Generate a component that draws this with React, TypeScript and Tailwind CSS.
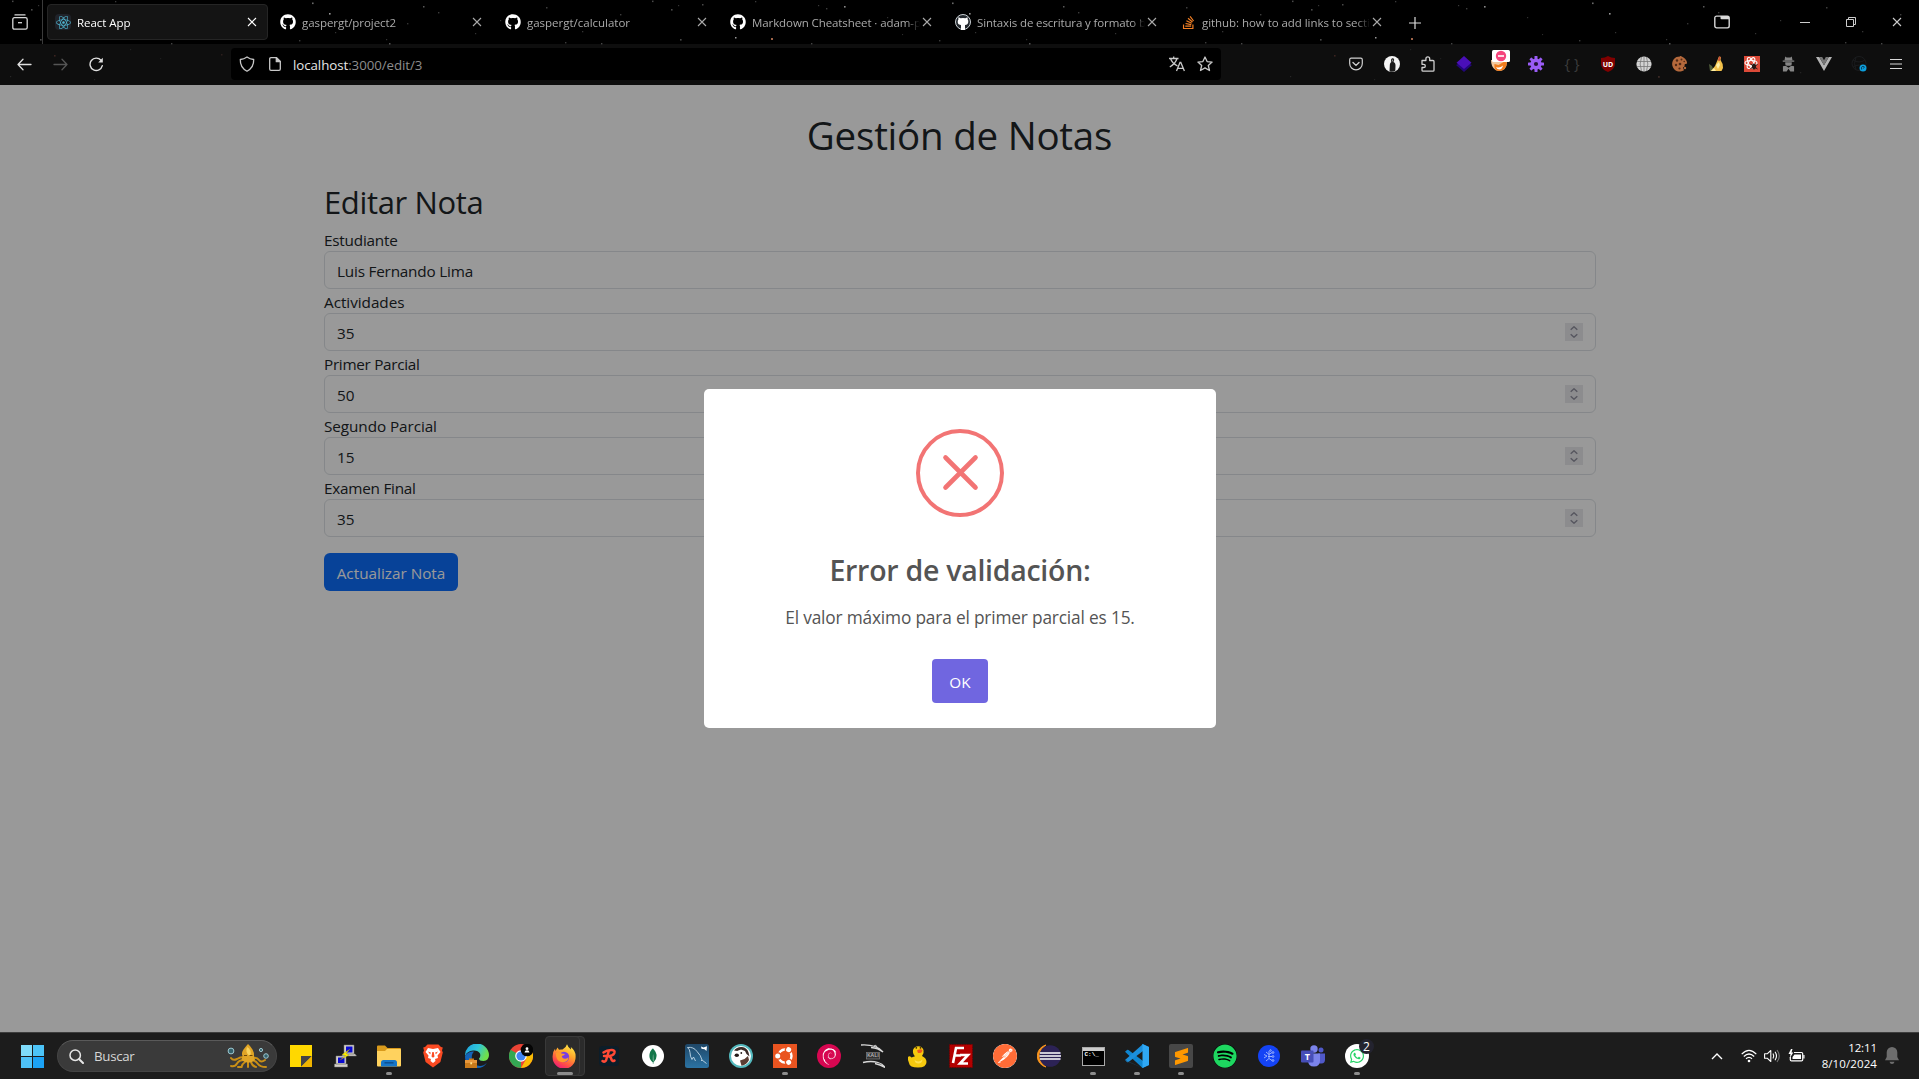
import type { ReactNode } from "react";
import { FaGithub, FaReact, FaStackOverflow, FaWhatsapp, FaSpotify } from "react-icons/fa";
import { SiDebian, SiMongodb, SiPostman, SiSublimetext } from "react-icons/si";

/* ---------- starry browser theme ---------- */

const stars: [number, number, number, string][] = [
  [31, 9, 1.6, "#4a4a4a"], [38, 5, 1.2, "#333"], [115, 1, 1.3, "#3a3a3a"], [40, 39, 1.6, "#484848"], [95, 37, 1.5, "#999"],
  [131, 38, 2, "#a0654a"], [178, 5, 1.2, "#383838"], [186, 8, 1.4, "#3c3c3c"], [204, 6, 1.6, "#8a8a8a"], [171, 43, 1.4, "#444"],
  [312, 2.5, 1.6, "#6a6a6a"], [329, 13, 1.6, "#999"], [423, 6, 1.5, "#5a5a5a"], [438, 12, 1.4, "#3c3c3c"], [407, 23, 1.4, "#333"],
  [299, 40, 1.4, "#3c3c3c"], [335, 32, 1.2, "#333"], [386, 39, 1.2, "#333"], [389, 43, 1.5, "#555"], [62, 4, 1.5, "#484848"],
  [601, 43, 1.4, "#484848"], [565, 42, 1.4, "#3c3c3c"], [12, 0.6, 1.5, "#4a4a4a"], [500, 20, 1.2, "#333"], [546, 7, 1.5, "#3c3c3c"],
  [582, 31, 1.3, "#333"], [247, 17, 1.2, "#2e2e2e"], [262, 34, 1.1, "#2c2c2c"], [475, 33, 1.2, "#333"], [620, 14, 1.4, "#3c3c3c"],
  [54, 55, 1.6, "#3a2420"], [10, 76, 1.2, "#262626"], [94, 79, 1.2, "#222"], [160, 58, 1.2, "#1e1e1e"], [221, 54, 1.5, "#2c1e1c"],
  [378, 76, 1.8, "#3a2824"], [330, 61, 1.3, "#222"], [130, 49, 1.2, "#222"], [440, 60, 1.2, "#222"], [520, 72, 1.3, "#242424"],
];

function StarField({ shift, height }: { shift: number; height: number }) {
  return (
    <svg className="pointer-events-none absolute inset-0" width="1919" height={height} aria-hidden="true">
      {[0, 640, 1280].map((dx) =>
        stars.map(([x, y, s, c], i) => <rect key={`${dx}-${i}`} x={x + dx} y={y - shift} width={s} height={s} fill={c} />),
      )}
    </svg>
  );
}

/* ---------- tabs ---------- */

const Cross = ({ className }: { className: string }) => (
  <svg width="10" height="10" viewBox="0 0 10 10" className={className}>
    <path d="M1 1l8 8M9 1l-8 8" stroke="currentColor" strokeWidth="1.1" fill="none" />
  </svg>
);

const Octocat = () => <FaGithub size={16} className="text-white" />;

const tabs: { title: string; icon: ReactNode; cls: string; active?: boolean }[] = [
  {
    title: "React App",
    cls: "tracking-[-0.04px] text-white",
    active: true,
    icon: (
      <span className="flex size-4 items-center justify-center rounded-sm bg-[#20232a]">
        <FaReact size={15} className="text-[#4fb4cf]" />
      </span>
    ),
  },
  { title: "gaspergt/project2", cls: "tracking-[-0.06px] text-[#aaa]", icon: <Octocat /> },
  { title: "gaspergt/calculator", cls: "tracking-[-0.01px] text-[#aaa]", icon: <Octocat /> },
  { title: "Markdown Cheatsheet · adam-p", cls: "tracking-[-0.09px] text-[#aaa]", icon: <Octocat /> },
  {
    title: "Sintaxis de escritura y formato b",
    cls: "tracking-[-0.13px] text-[#aaa]",
    icon: (
      <svg width="16" height="16" viewBox="0 0 16 16">
        <circle cx="8" cy="8" r="7.5" fill="#24292e" stroke="#dfe5ea" strokeWidth=".9" />
        <path d="M3.6 3.2l2 1q2.4-.5 4.8 0l2-1q.5 1 .2 2.1.9 1 .7 2.600-.3 2.800-3.300 3.100v5H6v-5C3 10.500 2.700 9 2.700 7.700c0-1 .3-1.800.8-2.400-.3-.9-.1-1.700.1-2.100z" fill="#fff" />
      </svg>
    ),
  },
  {
    title: "github: how to add links to secti",
    cls: "tracking-[-0.05px] text-[#aaa]",
    icon: <FaStackOverflow size={15} className="text-[#f48024]" />,
  },
];

function TabStrip() {
  return (
    <div className="relative flex h-11 bg-black">
      <StarField shift={0} height={44} />
      <div className="relative flex w-[43px] items-center justify-center border-r border-[#3a3a3a] pr-0.5">
        <svg width="16" height="16" viewBox="0 0 16 16" fill="none" stroke="#d8d8d8" strokeWidth="1.3">
          <path d="M3 .9h10" strokeLinecap="round" />
          <path d="M.8 5.4q0-1.7 1.7-1.7h11q1.7 0 1.7 1.7v8q0 1.7-1.7 1.7h-11q-1.7 0-1.7-1.7z" />
          <path d="M6 8.7h4" />
        </svg>
      </div>
      <div className="relative ml-1 flex gap-1 py-1">
        {tabs.map((t) => (
          <div
            key={t.title}
            className={
              t.active
                ? "flex w-[221px] items-center rounded border border-[#252525] bg-[#141414] pl-[7px]"
                : "flex w-[221px] items-center border border-transparent pl-[7px]"
            }
          >
            <span className="flex size-4 shrink-0 items-center justify-center">{t.icon}</span>
            <span className="ml-1.5 w-[168px] shrink-0 overflow-hidden mask-r-from-92% mask-r-to-100%">
              <span className={`block pt-px text-[11.5px] leading-5 whitespace-nowrap ${t.cls}`}>{t.title}</span>
            </span>
            <Cross className={t.active ? "ml-0.5 shrink-0 text-white" : "ml-0.5 shrink-0 text-[#aaa]"} />
          </div>
        ))}
      </div>
      <div className="relative ml-4 flex items-center">
        <svg width="12" height="12" viewBox="0 0 12 12" className="mt-0.5">
          <path d="M6 0v12M0 6h12" stroke="#ddd" strokeWidth="1.2" />
        </svg>
      </div>
      <div className="relative ml-auto -mr-px flex items-center">
        <span className="mr-[37px] flex w-[46px] justify-center">
          <svg width="16" height="14" viewBox="0 0 16 14">
            <rect x=".8" y="1.1" width="14.4" height="11.8" rx="1.8" fill="none" stroke="#d8d8d8" strokeWidth="1.4" />
            <path d="M6.500 1h8.500v3.200H7.500q-1 0-1-1z" fill="#d8d8d8" />
          </svg>
        </span>
        <span className="flex w-[46px] justify-center">
          <svg width="10" height="10"><path d="M0 5.5h10" stroke="#ccc" /></svg>
        </span>
        <span className="flex w-[46px] justify-center">
          <svg width="10" height="10" fill="none" stroke="#ccc"><path d="M.5 2.5h7v7h-7zM2.500 2.500v-2h7v7h-2" /></svg>
        </span>
        <span className="flex w-[46px] justify-center text-[#ccc]"><Cross className="" /></span>
      </div>
    </div>
  );
}

/* ---------- toolbar ---------- */

const extensions: ReactNode[] = [
  <svg key="pocket" width="14" height="14" viewBox="0 0 14 14" fill="none" stroke="#d0d0d0" strokeWidth="1.2" strokeLinecap="round">
    <path d="M2.2 1.2h9.6q1.5 0 1.5 1.5V6.500a6.300 6.300 0 0 1-12.600 0V2.700q0-1.500 1.500-1.500z" />
    <path d="M4 5.500l3 2.900 3-2.900" strokeWidth="1.4" />
  </svg>,
  <svg key="avatar" width="16" height="16" viewBox="0 0 16 16">
    <circle cx="8" cy="8" r="8" fill="#f5f5f5" />
    <path d="M8.500 2.300c1.300 0 1.800.9 1.600 2-.1.900-.4 1.300-.7 1.800 1.500.5 2.200 1.700 2.100 3.800l-.2 4.800Q8.500 16.500 5.500 15.200L5.800 9.500c.1-2 .7-2.900 1.600-3.400-.6-1.400-.5-3.700 1.100-3.800z" fill="#1c1c1c" />
    <path d="M8 3.600l1.300.2-.3 1.800-.9-.3z" fill="#999" />
  </svg>,
  <svg key="puzzle" width="14" height="16" viewBox="0 0 14 16" fill="none" stroke="#d0d0d0" strokeWidth="1.3" strokeLinejoin="round">
    <path d="M1 4.500h3.900V2.800a1.900 1.900 0 0 1 3.800 0v1.700H12q1 0 1 1v8.700q0 1-1 1H2q-1 0-1-1v-2.700h1.700a1.600 1.600 0 0 0 0-3.200H1z" />
  </svg>,
  <svg key="diamond" width="16" height="16" viewBox="0 0 16 16">
    <path d="M8 5l8 4-8 7-8-7z" fill="#22067a" />
    <path d="M8 0l7.5 6.8L8 13 .5 6.8z" fill="#4a0fb8" />
  </svg>,
  <svg key="fox" width="20" height="22" viewBox="0 0 20 22" className="-mt-1.5 ml-0.5">
    <path d="M0 10q0 7 4.500 10 5 2.500 9-1Q16.500 15.500 16 10z" fill="#f2c79c" />
    <path d="M3.500 14l4 1 5-3 3-2q1 5.500-2 9-4.500 3.500-9 1-1.500-2-1-6z" fill="#f07c1d" />
    <path d="M5 17q4 1.500 7-1.500-1 4-3.500 4T5 17z" fill="#fff" />
    <rect x="1" y="0" width="18" height="12" rx="1.5" fill="#fff" />
    <circle cx="10" cy="6" r="5.2" fill="#f5447c" />
    <path d="M7 6h6" stroke="#fff" strokeWidth="1.6" />
  </svg>,
  <svg key="gear" width="16" height="16" viewBox="-8 -8 16 16">
    <g fill="#9a5cf5">
      {[0, 45, 90, 135].map((a) => <rect key={a} x="-1.5" y="-8" width="3" height="16" rx=".6" transform={`rotate(${a})`} />)}
      <circle r="5.6" />
    </g>
    <circle r="2.1" fill="#241238" />
  </svg>,
  <span key="json" className="mb-0.5 text-[15px] leading-4 whitespace-nowrap text-[#3c3c3c]">{"{ }"}</span>,
  <span key="ud" className="relative flex size-4 items-center justify-center">
    <svg className="absolute inset-0" width="16" height="16" viewBox="0 0 16 16">
      <path d="M8 0q3 2 7 2v6q0 5-7 8-7-3-7-8V2q4 0 7-2z" fill="#800000" />
    </svg>
    <span className="relative text-[7px] leading-none font-bold text-white">UD</span>
  </span>,
  <svg key="globe" width="16" height="16" viewBox="0 0 16 16">
    <circle cx="8" cy="8" r="7.6" fill="#d2d2d2" />
    <path d="M8 .5v15M1 5.500h14M1 10.500h14M5.500 1Q2.800 8 5.500 15M10.500 1q2.700 7 0 14" fill="none" stroke="#777" strokeWidth=".8" />
  </svg>,
  <svg key="cookie" width="16" height="16" viewBox="0 0 16 16">
    <path d="M8 .4A7.600 7.600 0 1 0 12 14.300l-1-2.800 1.500-1 .2-2.300 2.400-.6q0-4-3.600-6.200T8 .4z" fill="#b5693c" />
    <g fill="#512a17"><circle cx="5" cy="4.5" r="1.2" /><circle cx="9.5" cy="3.5" r="1" /><circle cx="4" cy="9" r="1.2" /><circle cx="8" cy="8" r="1.3" /><circle cx="7.5" cy="12.5" r="1.1" /><circle cx="12.2" cy="5.5" r=".8" /></g>
    <circle cx="13" cy="12" r="1.2" fill="#b5693c" />
  </svg>,
  <svg key="broom" width="16" height="16" viewBox="0 0 16 16">
    <path d="M1 8l3 2 2 5H2z" fill="#53603c" />
    <path d="M11 .5l2 .5-.5 3q3 4 2.500 8l-1.500 3H3l4-5z" fill="#f2c14b" />
    <path d="M3 15l3-3 2 3zM8 9l3-3 1 3-2 4z" fill="#fff0a6" />
    <path d="M11 .5l1.800.5-1 4-2-.5z" fill="#c94f35" />
  </svg>,
  <svg key="redbug" width="16" height="16" viewBox="0 0 16 16">
    <rect width="16" height="16" fill="#dc4a38" />
    <g fill="none" stroke="#fff" strokeWidth="1.1"><ellipse cx="7" cy="7" rx="6" ry="2.5" /><ellipse cx="7" cy="7" rx="6" ry="2.5" transform="rotate(60 7 7)" /><ellipse cx="7" cy="7" rx="6" ry="2.5" transform="rotate(120 7 7)" /></g>
    <ellipse cx="10" cy="10.5" rx="2" ry="3" fill="#251815" />
    <path d="M6.500 8l7 5M6.500 12.500l7-4" stroke="#251815" />
  </svg>,
  <svg key="agent" width="13" height="16" viewBox="0 0 14 16" fill="#858585">
    <path d="M3.500 0L5 1h4l1.500-1 .8 4H2.700zM.8 4.200h12.400v1.400H.8z" />
    <path d="M3.500 6h7v2.500L9 10H5L3.500 8.500zM1 10.500l3-.5 3 2 3-2 3 .5V16H9l-2-3-2 3H1z" />
  </svg>,
  <svg key="vue" width="16" height="14" viewBox="0 0 16 14">
    <path d="M0 0h3.200L8 8.300 12.800 0H16L8 14z" fill="#b4b4b4" />
    <path d="M3.200 0h3L8 3.200 9.800 0h3L8 8.300z" fill="#777" />
  </svg>,
  <svg key="globe-blue" width="18" height="18" viewBox="0 0 18 18">
    <g fill="none" stroke="#1a1c1e"><circle cx="8" cy="8.5" r="7" /><path d="M2 5q6 4 12 0M2 12q6-4 12 0M5 2q-3 6.500 0 13" /></g>
    <circle cx="12" cy="13" r="3.5" fill="#0c9fdc" />
    <path d="M10.500 14.500v-2.300l1.500-1 1.500 1-1.700 1.400" stroke="#073b57" fill="none" strokeWidth=".9" />
  </svg>,
  <svg key="menu" width="12" height="12" stroke="#d8d8d8" strokeWidth="1.2"><path d="M0 1.500h12M0 6h12M0 10.500h12" /></svg>,
];

function Toolbar() {
  return (
    <div className="relative flex h-[41px] bg-[#0e0e0e] pt-1 pb-[5px]">
      <StarField shift={44} height={41} />
      <div className="relative ml-1.5 flex w-[225px]">
        <span className="flex w-9 items-center justify-center">
          <svg width="15" height="13" fill="none" stroke="#e0e0e0" strokeWidth="1.3" strokeLinecap="round" strokeLinejoin="round"><path d="M14 6.500H1M6 1.300L1 6.500l5 5.200" /></svg>
        </span>
        <span className="flex w-9 items-center justify-center">
          <svg width="15" height="13" fill="none" stroke="#555" strokeWidth="1.3" strokeLinecap="round" strokeLinejoin="round"><path d="M1 6.500h13M9 1.300l5 5.200-5 5.200" /></svg>
        </span>
        <span className="flex w-9 items-center justify-center">
          <svg width="15" height="15" fill="none" stroke="#e0e0e0" strokeWidth="1.4" strokeLinecap="round"><path d="M13.300 8.700A6.200 6.200 0 1 1 12 3.300" /><path d="M13.800.8v4.600H9.200z" fill="#e0e0e0" stroke="none" /></svg>
        </span>
      </div>
      <div className="relative flex w-[990px] items-center rounded bg-black pl-2">
        <svg width="16" height="16" viewBox="0 0 16 16" fill="none" stroke="#c8c8c8" strokeWidth="1.3" strokeLinejoin="round">
          <path d="M8 .9q3 2.200 6.700 2.600Q15 11.500 8 15.200 1 11.500 1.300 3.500 5 3.100 8 .9z" />
        </svg>
        <svg width="12" height="14" viewBox="0 0 12 14" fill="none" stroke="#c8c8c8" strokeWidth="1.3" strokeLinejoin="round" className="ml-3.5">
          <path d="M7.500.7H2Q.7.7.7 2v10q0 1.300 1.300 1.300h8q1.300 0 1.300-1.300V4.500z" />
          <path d="M7.300.7v4h4z" fill="#c8c8c8" />
        </svg>
        <span className="ml-3 pt-0.5 text-[13.3px] leading-5 tracking-[-0.06px] text-[#8d8d8d]">
          <span className="text-[#e6e6e6]">localhost</span>:3000/edit/3
        </span>
        <span className="ml-auto flex items-center gap-3 pr-2">
          <svg width="16" height="16" viewBox="0 0 16 16" fill="none" stroke="#c8c8c8" strokeWidth="1.3">
            <path d="M0 2.500h9.500M4.700.5v2M1.500 2.500q1.500 4.500 7 7.500M8 2.500Q6.500 7.500.8 11" />
            <path d="M7.500 15l3.500-8.500h.8L15.400 15M8.800 12.300H14" />
          </svg>
          <svg width="16" height="16" viewBox="0 0 16 16" fill="none" stroke="#c8c8c8" strokeWidth="1.3" strokeLinejoin="round">
            <path d="M8 1l2.100 4.600 5 .5-3.800 3.400 1.200 5L8 11.900l-4.500 2.600 1.200-5L.9 6.100l5-.5z" />
          </svg>
        </span>
      </div>
      <div className="relative ml-[117px] flex">
        {extensions.map((e, i) => <span key={i} className="flex w-9 items-center justify-center">{e}</span>)}
      </div>
    </div>
  );
}

/* ---------- page ---------- */

const Spinner = () => (
  <span className="mr-3 flex size-[18px] items-center justify-center bg-[#e9e9ed]">
    <svg width="8" height="12" viewBox="0 0 8 12" fill="none" stroke="#8f8f9d" strokeWidth="1.4">
      <path d="M.7 3.800L4 .8l3.300 3M.7 8.200l3.300 3 3.300-3" />
    </svg>
  </span>
);

const fields = [
  { label: "Estudiante", value: "Luis Fernando Lima", l: "tracking-[-0.22px]", v: "tracking-[-0.2px]", number: false },
  { label: "Actividades", value: "35", l: "tracking-[-0.04px]", v: "tracking-normal", number: true },
  { label: "Primer Parcial", value: "50", l: "tracking-[-0.3px]", v: "tracking-normal", number: true },
  { label: "Segundo Parcial", value: "15", l: "tracking-[-0.08px]", v: "tracking-normal", number: true },
  { label: "Examen Final", value: "35", l: "tracking-[-0.24px]", v: "tracking-normal", number: true },
];

function NotePage() {
  return (
    <main className="relative flex h-[947px] flex-col bg-white text-[#212529]">
      <h1 className="h-[72px] pt-6 text-center text-[38.5px] leading-[53px] tracking-[-0.23px]">Gestión de Notas</h1>
      <section className="mt-6 ml-[324px] w-[1272px] text-[15.3px]">
        <h2 className="mb-2 h-[38px] text-[31px] leading-[42px] tracking-[-0.36px]">Editar Nota</h2>
        {fields.map((f) => (
          <div key={f.label}>
            <div className={`h-6 leading-[26px] ${f.l}`}>{f.label}</div>
            <div className="flex h-[38px] items-center justify-between rounded-md border border-[#dee2e6] pl-3">
              <span className={`pt-0.5 leading-[34px] ${f.v}`}>{f.value}</span>
              {f.number && <Spinner />}
            </div>
          </div>
        ))}
        <button className="mt-4 block h-[38px] w-[134px] rounded-md bg-[#0d6efd] leading-10 tracking-normal text-white">Actualizar Nota</button>
      </section>
      <div className="absolute inset-0 bg-black/40 pt-[304px] pl-[704px]">
        <div className="flex h-[339px] w-[512px] flex-col items-center rounded-[5px] bg-white pt-10 text-[#545454]">
          <svg width="88" height="88" viewBox="0 0 88 88" fill="none" stroke="#f27474" className="shrink-0">
            <circle cx="44" cy="44" r="42" strokeWidth="4" />
            <path d="M29.500 28.500l30 30M59.500 28.500l-30 30" strokeWidth="4.6" strokeLinecap="round" />
          </svg>
          <h2 className="mt-[22px] text-[28.5px] leading-[62px] font-semibold tracking-[-0.27px]">Error de validación:</h2>
          <p className="text-[17.3px] leading-[33px] tracking-[-0.17px]">El valor máximo para el primer parcial es 15.</p>
          <button className="mt-[25px] h-11 w-14 rounded bg-[#7066e0] text-[15.3px] leading-[46px] text-white">OK</button>
        </div>
      </div>
    </main>
  );
}

/* ---------- taskbar ---------- */

const Disc = ({ className, children }: { className: string; children: ReactNode }) => (
  <span className={`flex items-center justify-center rounded-full ${className}`}>{children}</span>
);

const apps: { name: string; icon: ReactNode; running?: boolean; active?: boolean }[] = [
  {
    name: "notes",
    icon: <svg width="22" height="22"><path d="M0 0h22v12L12 22H0z" fill="#ffd800" /><path d="M11 11h11L11 22z" fill="#444" /><path d="M22 11v11H11z" fill="#f0b400" /></svg>,
  },
  {
    name: "putty",
    icon: (
      <svg width="24" height="24" viewBox="0 0 24 24">
        <path d="M11 1h10v9H11zM10 10h12l1.500 2H9z" fill="#d4d0c8" stroke="#777" strokeWidth=".5" />
        <path d="M13 2.500h6.500v6H13z" fill="#0a0ad0" />
        <path d="M3 12h10v8H3zM1.500 20h13v3h-13z" fill="#d4d0c8" stroke="#777" strokeWidth=".5" />
        <path d="M5 13.500h6.500v5.500H5z" fill="#0a0ad0" />
        <path d="M17 5l-8 5.500 3.500 1L7 16l9-5-3-1.500z" fill="#fff200" stroke="#8a8200" strokeWidth=".3" />
      </svg>
    ),
  },
  {
    name: "explorer",
    running: true,
    icon: (
      <svg width="24" height="24" viewBox="0 0 24 24">
        <path d="M0 2.500Q0 1.500 1 1.500h7l2.500 2.500H23q1 0 1 1v6H0z" fill="#d99a1c" />
        <path d="M0 7h8l2-2h13q1 0 1 1v15.500q0 1-1 1H1q-1 0-1-1z" fill="#ffd25e" />
        <path d="M4 22.500v-4Q4 16 6.500 16h11q2.500 0 2.500 2.500v4z" fill="#1676c8" />
        <path d="M7.500 18.800h9" stroke="#0d4f8e" strokeWidth="1.5" />
      </svg>
    ),
  },
  {
    name: "brave",
    icon: (
      <svg width="24" height="24" viewBox="0 0 24 24">
        <path d="M6.500.5h11L20 3l1.800.5-.8 3 .8 2-2.400 9.500L12 23.500 4.600 18 2.200 8.500l.8-2-.8-3L4 3z" fill="#fb4a22" />
        <path d="M7 4l5 1 5-1 2.500 4-3 3.500.5 2.500-3 1 .5 2-2.500 2-2.500-2 .5-2-3-1 .5-2.500L4.500 8z" fill="#fff" />
        <path d="M7 7.500l3 1.200-1 1.500zM17 7.500l-3 1.200 1 1.500zM11.300 8h1.400l.8 4.500-1.500 1.200-1.500-1.200z" fill="#fb4a22" />
      </svg>
    ),
  },
  {
    name: "edge",
    icon: (
      <svg width="24" height="24" viewBox="0 0 24 24">
        <defs><linearGradient id="edg" x1="0" y1="0" x2="1" y2=".4"><stop offset="0" stopColor="#1c9fe0" /><stop offset=".55" stopColor="#2fc6d8" /><stop offset="1" stopColor="#6fe04a" /></linearGradient></defs>
        <path d="M0 12A12 12 0 0 1 24 11q0 5.500-5.500 6-4.500 0-4.500-2.500 2-2 1-5-2-3.500-7-3Q2 7 0 12z" fill="url(#edg)" />
        <path d="M0 12q3-5 9-4.500-3 3-2 8 2 6 8 6.500 4 0 7-3.500Q19 24 12 24 0 24 0 12z" fill="#1464b8" />
        <path d="M4 16v-1.500h5V16h3v8H0v-8z" fill="#c97a1b" />
        <path d="M0 16h12v3H0z" fill="#e8973a" />
        <path d="M5.300 18.300h1.800v2H5.300z" fill="#ffe28a" />
      </svg>
    ),
  },
  {
    name: "chrome",
    icon: (
      <svg width="24" height="24" viewBox="0 0 24 24">
        <circle cx="12" cy="12" r="12" fill="#ea4335" />
        <path d="M12 12L1.600 6A12 12 0 0 0 12 24z" fill="#34a853" />
        <path d="M12 24A12 12 0 0 0 22.400 6H12l5.200 9z" fill="#fbbc05" />
        <path d="M1.600 6l5.200 9L12 12z" fill="#34a853" />
        <circle cx="12" cy="12" r="5.8" fill="#fff" />
        <circle cx="12" cy="12" r="4.6" fill="#4285f4" />
        <circle cx="18" cy="6" r="6.3" fill="#050505" />
        <circle cx="18" cy="4.7" r="1.4" fill="#fff" />
        <path d="M15.500 8.500q.3-2.200 2.500-2.200t2.500 2.200z" fill="#fff" />
      </svg>
    ),
  },
  {
    name: "firefox",
    running: true,
    active: true,
    icon: (
      <svg width="24" height="24" viewBox="0 0 24 24">
        <defs><linearGradient id="ffx" x1=".8" y1="0" x2=".3" y2="1"><stop offset="0" stopColor="#fff04a" /><stop offset=".4" stopColor="#ffa52b" /><stop offset=".75" stopColor="#ff4f45" /><stop offset="1" stopColor="#ec1a7a" /></linearGradient></defs>
        <path d="M15 .3q1 3.200 4 5.200.2-1.500-.2-2.500Q24 7 23.600 13A11.500 11.500 0 0 1 .6 13.500Q.3 8 3 4.800L3.500 7l2-3.500 1.500 2.300q1.500-.5 3.500-.2Q14 4 15 .3z" fill="url(#ffx)" />
        <circle cx="12" cy="13" r="5.2" fill="#7a3ee0" />
        <path d="M4 9q3-1.500 5.500.5L13 10q-.5 1.500-3.200 2 .2 2.500 3.200 2.800 2.500.2 3.500-1.800 0 5-5.500 5.200T4 12z" fill="#ff9a2b" />
      </svg>
    ),
  },
  {
    name: "responsively",
    icon: (
      <svg width="20" height="20" viewBox="0 0 20 20">
        <rect width="20" height="20" rx="3.5" fill="#0c1d29" />
        <path d="M4.500 6.500Q8 3.800 13 4q3.500.5 2.300 3.200Q14 9.800 9.500 10.200M9.800 5L7 14.500q-1.500 2-3.500.5M9.500 10.200q2.500.3 2.800 3 .7 2.500 3.200 1.300M8.200 10H5" fill="none" stroke="#ff4a36" strokeWidth="2.5" strokeLinecap="round" />
      </svg>
    ),
  },
  { name: "mongodb", icon: <Disc className="size-[22px] bg-white"><SiMongodb size={16} className="text-[#13774a]" /></Disc> },
  {
    name: "mysql",
    icon: (
      <svg width="24" height="24" viewBox="0 0 24 24">
        <defs><linearGradient id="sql" x2="0" y2="1"><stop offset="0" stopColor="#1f4767" /><stop offset="1" stopColor="#2b73a3" /></linearGradient></defs>
        <rect width="24" height="24" rx="2.5" fill="url(#sql)" />
        <path d="M2.500 3.500q6-1 9.500 4 4 4 5 8.500l4.500 3.500M2.500 3.500q2.500 2 2.500 5 0 4 2 7l1.500-2.500 2 4M17 16l-1 1" fill="none" stroke="#c3d8e6" strokeWidth=".9" />
        <path d="M16 2.500l2.500 1L22 2.300l-.5 4.700-2-1.700-3-.6z" fill="#fff" />
      </svg>
    ),
  },
  {
    name: "dbeaver",
    icon: (
      <svg width="24" height="24" viewBox="0 0 24 24">
        <circle cx="12" cy="12" r="12" fill="#53b8bd" />
        <circle cx="12" cy="12" r="10" fill="#fff" />
        <path d="M5 6.500Q8 2.500 13 3q5 .5 6.500 5.500l1 4-3-2.500-1.500-3-4-1.500L8.500 7z" fill="#3a2a26" />
        <path d="M8 7l4-.8L15.500 9q1.500 3-.5 6.500l-3.500 1.500-4-2z" fill="#fff" />
        <ellipse cx="7.8" cy="11.2" rx="2.2" ry="1.7" fill="#241a18" />
        <circle cx="12.3" cy="9" r=".9" fill="#241a18" />
        <path d="M11 16.500l4.500-1.500 3.500-3 1 4q-2 4.500-7.500 5.800z" fill="#5b3d33" />
      </svg>
    ),
  },
  {
    name: "ubuntu",
    running: true,
    icon: (
      <svg width="24" height="24" viewBox="0 0 24 24">
        <rect width="24" height="24" fill="#e95420" />
        <circle cx="12" cy="12" r="6.5" fill="none" stroke="#fff" strokeWidth="2.4" />
        {[60, 180, 300].map((a) => (
          <g key={a} transform={`rotate(${a} 12 12)`}><circle cx="19" cy="12" r="3.7" fill="#e95420" /><circle cx="19.3" cy="12" r="2.5" fill="#fff" /></g>
        ))}
      </svg>
    ),
  },
  { name: "debian", icon: <Disc className="size-6 bg-[#d70751]"><SiDebian size={17} className="text-white" /></Disc> },
  {
    name: "kali",
    icon: (
      <span className="relative flex size-6 items-center justify-center">
        <svg className="absolute inset-0" width="24" height="24" viewBox="0 0 24 24" fill="none" stroke="#d8d8d8">
          <path d="M0 1q8-.5 14 1.500 5 1.500 8 5.500-5-4-12-4.500M2 18.500q8-2 15 0 5 1.500 7 5-5-3-10-4" strokeWidth="1.3" />
          <path d="M13 2q2-2 3 1" />
          <rect x="5.5" y="8.5" width="13" height="6.5" stroke="#777" fill="#333" strokeWidth=".8" />
        </svg>
        <span className="relative text-[5.5px] leading-none font-semibold text-[#bbb]">KALI</span>
      </span>
    ),
  },
  {
    name: "duck",
    icon: (
      <svg width="24" height="24" viewBox="0 0 24 24">
        <path d="M3 13q1.500-1.500 3.500.5l3.500-1.300Q7.500 10 8 6A5.500 5.500 0 0 1 18.500 6q.8 3.500-1.500 6 4.500 2 4.500 6 0 5.500-8.500 5.500T4 19q-1.500-3-1-6z" fill="#f6c90e" />
        <path d="M9.500 16q4 3 8-.5-.5 4-4 4t-4-3.500z" fill="#ffe04e" />
        <path d="M12 6.500q4-2.500 5.500 0-.5 3-4.500 2.500z" fill="#f0591e" />
        <circle cx="11.3" cy="3.8" r=".9" fill="#3a2a00" /><circle cx="15.5" cy="3.8" r=".9" fill="#3a2a00" />
      </svg>
    ),
  },
  {
    name: "filezilla",
    icon: (
      <svg width="24" height="24" viewBox="0 0 24 24">
        <rect x=".5" y=".5" width="23" height="23" fill="#b30000" stroke="#6e0000" strokeDasharray="1.5 1" />
        <path d="M4 19L7 4h8M5.500 11.500h6.500M11 11h8l-8 8.500h8" fill="none" stroke="#fff" strokeWidth="2.6" />
      </svg>
    ),
  },
  { name: "postman", icon: <SiPostman size={24} className="rounded-full bg-white text-[#ff6c37]" /> },
  {
    name: "eclipse",
    icon: (
      <svg width="24" height="24" viewBox="0 0 24 24">
        <path d="M9 1A11.300 11.300 0 0 0 9 23 13 13 0 0 1 9 1z" fill="#f7941e" stroke="#f7941e" />
        <circle cx="13.2" cy="12" r="10.8" fill="#2c2255" />
        <path d="M3 9h20.500M2.500 12H24M3 15h20.500" stroke="#fff" strokeWidth="1.5" />
      </svg>
    ),
  },
  {
    name: "terminal",
    running: true,
    icon: (
      <span className="flex h-[19px] w-[23px] flex-col border border-[#aaa] bg-black">
        <span className="h-[3px] shrink-0 bg-[#ccc]" />
        <span className="pl-0.5 font-['Liberation_Mono'] text-[6px] leading-[7px] font-bold text-white">C:\_</span>
      </span>
    ),
  },
  {
    name: "vscode",
    running: true,
    icon: (
      <svg width="24" height="24" viewBox="0 0 24 24">
        <path d="M17.500 0L24 3v18l-6.500 3L0 7.800 2 6q.7-.5 1.500 0L18 17V7z" fill="#0f86d0" />
        <path d="M17.500 24L0 16.200 2 18q.7.5 1.500 0L18 7V0L0 16z" fill="#1b8fdc" />
        <path d="M17.500 0L24 3v18l-6.500 3z" fill="#2fa8f5" />
      </svg>
    ),
  },
  {
    name: "sublime",
    running: true,
    icon: <span className="flex size-6 items-center justify-center rounded-xs bg-[#474747]"><SiSublimetext size={17} className="text-[#ff9800]" /></span>,
  },
  { name: "spotify", icon: <Disc className="size-6 bg-black"><FaSpotify size={24} className="text-[#1ed760]" /></Disc> },
  {
    name: "kafka",
    icon: (
      <svg width="22" height="22" viewBox="0 0 22 22">
        <circle cx="11" cy="11" r="11" fill="#1443f5" />
        <g fill="none" stroke="#b4c5ff" strokeWidth=".8"><path d="M8 7l3 2.500v4L8 16M6 9.500l3 1.500-3 2M11 9.500l3-2M11 13.500l3 2M10 11.500h4M11 9.500V6" /><circle cx="12.5" cy="5.500" r=".8" /><circle cx="15" cy="7.5" r=".9" /><circle cx="15" cy="11.5" r=".9" /><circle cx="15" cy="15.5" r=".9" /></g>
      </svg>
    ),
  },
  {
    name: "teams",
    icon: (
      <span className="relative flex h-6 w-6 items-center">
        <svg className="absolute inset-0" width="24" height="24" viewBox="0 0 24 24">
          <circle cx="20" cy="6" r="2.5" fill="#5059c9" />
          <path d="M17 9.500h7v6q0 4-3.500 4H17z" fill="#5059c9" />
          <circle cx="13" cy="5" r="3.7" fill="#7b83eb" />
          <path d="M7 9.500h12v7q0 6-6 6t-6-6z" fill="#7b83eb" />
          <rect x="0" y="6.5" width="12.5" height="12" rx="1" fill="#464eb8" />
        </svg>
        <span className="relative w-[12.5px] pt-px text-center text-[9px] leading-none font-bold text-white">T</span>
      </span>
    ),
  },
  {
    name: "whatsapp",
    running: true,
    icon: (
      <span className="relative block">
        <Disc className="size-6 bg-white"><FaWhatsapp size={16} className="text-[#25d366]" /></Disc>
        <span className="absolute -top-[5px] left-3.5 flex size-[15px] items-center justify-center rounded-full bg-[#23232f] text-[12px] leading-none text-white">2</span>
      </span>
    ),
  },
];

const Octopus = () => (
  <svg width="42" height="26" viewBox="0 0 42 26">
    <g fill="none" stroke="#c98f16" strokeWidth="2" strokeLinecap="round">
      <path d="M17 14q-4 0-7 2-4 2-6-1M17 17q-5 0-7 3.500T4 23M18 19q-3 2-3.500 5H11M21 19v5M24 19q1 4 5 5M25 17q4 1 6 4t8 3M26 15q4-1 6 2t6 0" />
    </g>
    <path d="M21 1q2.500 2 4.500 5.500T27 13l1 4q-6.500 5.500-13.500 0l1-4q-1.500-3 1-6.500T21 1z" fill="#e0a526" />
    <path d="M20 4q2.500 1 3.500 4t-1 5q-4.500-3-2.500-9z" fill="#f8d25c" />
    <path d="M17 12.500h3M22.500 12.500h3" stroke="#6b4608" />
    <g fill="#35626c" stroke="#a8d4dc" strokeWidth=".9"><circle cx="4" cy="8" r="2.9" /><circle cx="34" cy="7" r="1.6" /><circle cx="39" cy="13" r="2.3" /></g>
  </svg>
);

function Taskbar() {
  return (
    <footer className="flex h-[47px] items-center border-t border-[#3d3d3d] bg-[#1c1c1c] text-white">
      <div className="ml-[21px] grid grid-cols-2 gap-px">
        <span className="size-[11px] bg-[#7fdcfb]" />
        <span className="size-[11px] bg-[#4cc4f8]" />
        <span className="size-[11px] bg-[#4ec2f8]" />
        <span className="size-[11px] bg-[#1ba2f5]" />
      </div>
      <div className="ml-[13px] flex h-8 w-[220px] items-center rounded-full border border-[#444] border-t-[#5a5a5a] bg-[#3a3a3a] pl-[11px]">
        <svg width="15" height="15" viewBox="0 0 15 15" fill="none" stroke="#e6e6e6" strokeLinecap="round"><circle cx="6.2" cy="6.2" r="5.2" strokeWidth="1.5" /><path d="M10.200 10.200l3.800 3.800" strokeWidth="2" /></svg>
        <span className="ml-2.5 text-[13.3px] leading-[30px] tracking-[-0.3px] text-[#d6d6d6]">Buscar</span>
        <span className="mr-[7px] ml-auto"><Octopus /></span>
      </div>
      <div className="ml-0.5 flex h-full">
        {apps.map((a) => (
          <div
            key={a.name}
            className={
              a.active
                ? "relative flex h-full w-11 items-center justify-center before:absolute before:inset-y-[3px] before:left-1.5 before:w-9 before:rounded before:border before:border-[#3a3a3a] before:bg-[#2b2b2b] after:absolute after:inset-y-[3px] after:left-0.5 after:w-[35px] after:rounded after:border after:border-[#393939] after:bg-[#2b2b2b]"
                : "relative flex h-full w-11 items-center justify-center"
            }
          >
            <span className={a.active ? "relative right-px z-10" : "relative z-10"}>{a.icon}</span>
            {a.running && (
              <span className={a.active ? "absolute bottom-1 z-10 h-[3px] w-4 rounded-full bg-[#8d8d8d]" : "absolute bottom-1 h-[3px] w-1.5 rounded-full bg-[#8d8d8d]"} />
            )}
          </div>
        ))}
      </div>
      <div className="ml-auto flex items-center">
        <svg width="12" height="7" fill="none" stroke="#fff" strokeWidth="1.4"><path d="M1 6l5-5 5 5" /></svg>
        <svg width="16" height="14" viewBox="0 0 16 14" fill="none" stroke="#fff" strokeWidth="1.2" className="ml-[18px]">
          <path d="M.7 5.200Q8-2.500 15.300 5.200M2.800 7.500q5.200-5 10.400 0M5 9.800q3-2.800 6 0" /><circle cx="8" cy="12" r="1.3" fill="#fff" stroke="none" />
        </svg>
        <svg width="16" height="14" viewBox="0 0 16 14" fill="none" stroke="#fff" strokeWidth="1.1" strokeLinejoin="round" className="ml-[7px]">
          <path d="M.6 4.800h2.600L6.800 1.500v11L3.200 9.200H.6zM9 4.500q1.500 2.500 0 5M11 2.800q3 4.200 0 8.400" /><path d="M13 1q4.500 6 0 12" stroke="#777" />
        </svg>
        <svg width="17" height="14" viewBox="0 0 17 14" className="ml-2">
          <path d="M6 3.500h7.500q1.200 0 1.200 1.200v6q0 1.200-1.200 1.200h-10q-1.200 0-1.200-1.200V8" fill="none" stroke="#fff" strokeWidth="1.2" />
          <path d="M4.500 10V8l2-2.500h6.500V10zM15.300 6h1.200v3.500h-1.200zM3 0L.5 5h2L1.800 9 5.300 3.500H3.500L4.500 0z" fill="#fff" />
        </svg>
        <div className="ml-2 w-[64px] text-right text-[11.5px] leading-4">
          <div className="tracking-[-0.1px]">12:11</div>
          <div className="tracking-[0.1px]">8/10/2024</div>
        </div>
        <svg width="14" height="18" viewBox="0 0 14 18" fill="#6e6e6e" className="mr-5 ml-2">
          <path d="M7 0a5.300 5.300 0 0 1 5.300 5.300V10l1.700 3.200H0L1.700 10V5.300A5.300 5.300 0 0 1 7 0zM4.500 14.800h5q-.5 2.200-2.500 2.200t-2.500-2.200z" />
        </svg>
      </div>
    </footer>
  );
}

export default function App() {
  return (
    <div className="flex h-[1079px] w-[1919px] flex-col overflow-hidden bg-black font-['Open_Sans',sans-serif]">
      <TabStrip />
      <Toolbar />
      <NotePage />
      <Taskbar />
    </div>
  );
}
